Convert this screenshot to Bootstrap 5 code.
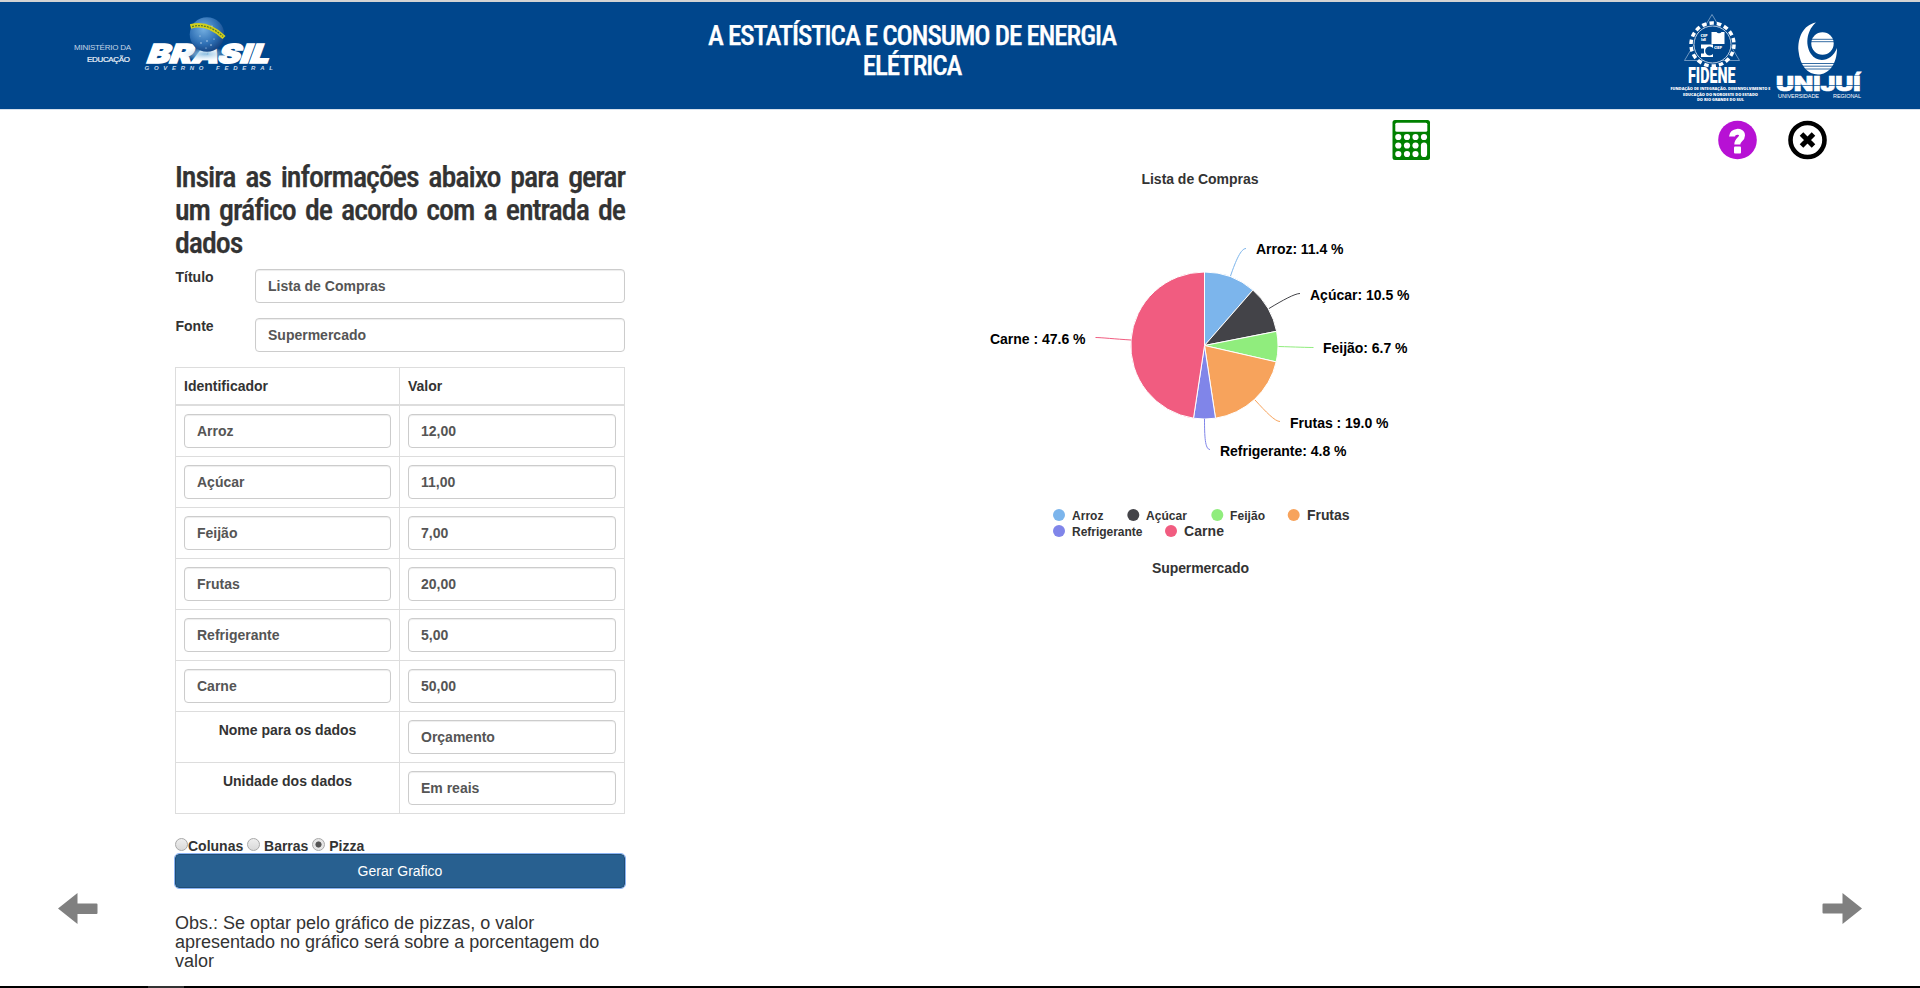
<!DOCTYPE html>
<html lang="pt-BR">
<head>
<meta charset="utf-8">
<title>A Estatística e Consumo de Energia Elétrica</title>
<link rel="stylesheet" href="https://cdn.jsdelivr.net/npm/bootstrap@5.3.0/dist/css/bootstrap.min.css">
<style>
  body { font-family: "Liberation Sans", Arial, sans-serif; font-size: 14px; line-height: 20px; color: #333; height: 988px; overflow: hidden; }
  svg { display: block; flex: none; }
  .topbar { height: 110px; margin-bottom: -1px; background: #00468c; border-top: 2px solid #d3d3d3; border-bottom: 1px solid #d5e0ec; }
  .heading-face { font-family: "Roboto Condensed", Roboto, sans-serif; font-stretch: condensed; letter-spacing: -1.05px; -webkit-text-stroke: .25px currentColor; }
  .page-title { width: 450px; margin: 19px 0 0 397px; font-size: 27px; line-height: 30px; font-weight: 500; color: #fff; text-align: center; }
  .brand-left { margin: 0 0 0 60px; }
  .brand-right { margin-left: auto; }
  .workspace { height: 877px; }
  .side-left { width: 175px; padding: 784px 0 0 58px; }
  .form-panel { width: 450px; padding-top: 51px; }
  .form-title { font-size: 30px; line-height: 33px; font-weight: 500; margin: 0 0 10px; color: #333; text-align: justify; }
  .field-row { height: 34px; margin-bottom: 15px; }
  .field-name { width: 80px; font-weight: 700; line-height: 17px; padding-left: .5px; }
  .form-control { height: 34px; padding: 6px 12px; font-size: 14px; line-height: 20px; font-weight: 700; color: #555; border: 1px solid #ccc; border-radius: 4px; box-shadow: inset 0 1px 1px rgba(0,0,0,.075); }
  .data-table { table-layout: fixed; border: 1px solid #ddd; border-collapse: collapse; margin: 0 0 21px; color: #333; }
  .data-table th, .data-table td { border: 1px solid #ddd; padding: 8px; font-weight: 700; vertical-align: top; }
  .data-table th:first-child { width: 224px; }
  .data-table thead th { border-bottom: 2px solid #ddd; }
  .kind-row { height: 19px; font-weight: 700; line-height: 23px; white-space: pre; }
  .kind-row .dot { width: 13px; height: 13px; border-radius: 50%; border: 1px solid #a8a8a8; background: linear-gradient(#eee,#d9d9d9); display: inline-block; }
  .kind-row .dot-on { background: radial-gradient(circle, #555 0 2.7px, #e6e6e6 3.4px); }
  .btn-run { height: 34px; background: #286090; border: 1px solid #204d74; border-radius: 4px; color: #fff; font-size: 14px; line-height: 20px; padding: 6px; outline: 1px solid #8bb4f4; }
  .note { font-size: 18px; line-height: 19px; margin: 26px 0 0; }
  .result { width: 500px; margin-left: 335px; }
  .side-right { flex: 1; }
  .tools { height: 51px; padding-top: 10px; }
  .bottom-edge { height: 2px; background: #000; }
  .bottom-edge div { width: 36px; height: 2px; margin-left: 148px; background: #333; }
</style>
</head>
<body class="bg-white">
<header class="topbar d-flex align-items-start">
  <svg class="brand-left" width="230" height="106" viewBox="60 2 230 106" font-family="Liberation Sans, sans-serif">
    <defs>
      <radialGradient id="globe" cx=".4" cy=".35" r=".7"><stop offset="0" stop-color="#73aee0"/><stop offset=".6" stop-color="#2f70b5"/><stop offset="1" stop-color="#123f7d"/></radialGradient>
      <radialGradient id="glow"><stop offset="0" stop-color="#8fc0e2"/><stop offset="1" stop-color="#cfe4f3" stop-opacity="0"/></radialGradient>
    </defs>
    <text x="74" y="50" font-size="8" fill="#c5d5e6" textLength="57">MINISTÉRIO DA</text>
    <text x="87" y="61.500" font-size="8" fill="#f0f5fa" stroke="#f0f5fa" stroke-width=".2" textLength="43">EDUCAÇÃO</text>
    <g transform="translate(208 62.500) skewX(-9)">
      <text x="-61" y="0" font-family="Inter, sans-serif" font-weight="900" font-style="italic" font-size="26" fill="#fff" stroke="#fff" stroke-width="1.500" textLength="122" lengthAdjust="spacingAndGlyphs">BRASIL</text>
    </g>
    <ellipse cx="205" cy="54" rx="23" ry="7" fill="url(#glow)"/>
    <circle cx="207" cy="34.500" r="17.300" fill="url(#globe)"/>
    <path d="M190.500 26.500q17-5 33.500 11" fill="none" stroke="#d2cf1c" stroke-width="4.500"/>
    <path d="M192 26.500q16-4 31 10" fill="none" stroke="#5d7e28" stroke-width="1.300" stroke-dasharray="2 1"/>
    <g fill="#d7e8f7"><circle cx="201" cy="43" r=".7"/><circle cx="207" cy="41" r=".7"/><circle cx="211" cy="45" r=".7"/><circle cx="200" cy="36" r=".6"/><circle cx="214" cy="39" r=".6"/><circle cx="206" cy="48" r=".6"/><circle cx="212" cy="26" r=".6"/></g>
    <text x="144.500" y="69.500" font-size="6" font-style="italic" font-weight="700" fill="#cbdbea" textLength="59">GOVERNO</text>
    <text x="216" y="69.500" font-size="6" font-style="italic" font-weight="700" fill="#cbdbea" textLength="57">FEDERAL</text>
  </svg>
  <h1 class="page-title heading-face">A ESTATÍSTICA E CONSUMO DE ENERGIA ELÉTRICA</h1>
  <svg class="brand-right" width="260" height="106" viewBox="1660 2 260 106" fill="#fff" font-family="Open Sans, sans-serif">
    <path d="M1712 14.500L1739.500 60.500H1684.500Z" fill="none" stroke="#88a9cd" stroke-width=".8"/>
    <circle cx="1712.500" cy="44.500" r="21.500" fill="none" stroke="#fff" stroke-width="3.500" stroke-dasharray="4.500 3.005"/>
    <circle cx="1712.500" cy="44.500" r="18.500" fill="#00468c" stroke="#bed0e4" stroke-width="1"/>
    <path d="M1711.500 32h5a3 3 0 0 0 5 0h3v12h-13z"/>
    <path d="M1701 44.500h12v3.500a4.500 4.500 0 1 0 0 6v3h-12v-3.500h3v-5h-3z"/>
    <text x="1700.500" y="36.500" font-size="4" font-weight="800" textLength="7">CEP</text><text x="1701" y="41" font-size="4" font-weight="800" textLength="5">IdI</text><text x="1714" y="49" font-size="4" font-weight="800" textLength="8">CIEP</text>
    <text x="1688" y="83" font-family="Roboto, sans-serif" font-size="21.500" font-weight="900" textLength="47.500" lengthAdjust="spacingAndGlyphs">FIDENE</text>
    <g font-size="4.200" font-weight="800">
      <text x="1670.500" y="90" textLength="100" lengthAdjust="spacingAndGlyphs">FUNDAÇÃO DE INTEGRAÇÃO, DESENVOLVIMENTO E</text>
      <text x="1683" y="95.700" textLength="75" lengthAdjust="spacingAndGlyphs">EDUCAÇÃO DO NOROESTE DO ESTADO</text>
      <text x="1697" y="101" textLength="47" lengthAdjust="spacingAndGlyphs">DO RIO GRANDE DO SUL</text>
    </g>
    <path d="M1816 22.500C1803 25 1797.500 38 1798.500 51C1800 66 1808 74.500 1818 74.500C1829 74.500 1837 64 1837 48C1832 61 1818 64 1811 54C1804 43 1808 29 1816 22.500Z"/>
    <circle cx="1822.500" cy="43.500" r="11.200"/>
    <path d="M1810 39.300h25M1810 41.700h25M1799 63.500h37M1801 66.200h34M1802 69h30" stroke="#00468c" stroke-width=".8"/>
    <text x="1776" y="91.300" font-family="Inter, sans-serif" font-size="19.500" font-weight="900" stroke="#fff" stroke-width=".6" textLength="84.500" lengthAdjust="spacingAndGlyphs">UNIJUÍ</text>
    <path d="M1776 85.500h84" stroke="#00468c" stroke-width=".7"/>
    <g font-family="Liberation Sans, sans-serif" font-size="5.500"><text x="1778" y="97.500" textLength="41">UNIVERSIDADE</text><text x="1833" y="97.500" textLength="28">REGIONAL</text></g>
  </svg>
</header>

<main class="workspace d-flex">
  <aside class="side-left flex-shrink-0">
    <svg width="40" height="32" fill="#808080"><path d="M0 15.500L19.500 0V10.500H38.500q1 0 1 1V20q0 1-1 1H19.500V31Z"/></svg>
  </aside>

  <section class="form-panel flex-shrink-0">
    <h2 class="form-title heading-face">Insira as informações abaixo para gerar um gráfico de acordo com a entrada de dados</h2>
    <div class="field-row d-flex"><label class="field-name">Título</label><input class="form-control flex-fill w-auto" value="Lista de Compras"></div>
    <div class="field-row d-flex"><label class="field-name">Fonte</label><input class="form-control flex-fill w-auto" value="Supermercado"></div>
    <table class="data-table w-100">
      <thead><tr><th>Identificador</th><th>Valor</th></tr></thead>
      <tbody>
        <tr><td><input class="form-control" value="Arroz"></td><td><input class="form-control" value="12,00"></td></tr>
        <tr><td><input class="form-control" value="Açúcar"></td><td><input class="form-control" value="11,00"></td></tr>
        <tr><td><input class="form-control" value="Feijão"></td><td><input class="form-control" value="7,00"></td></tr>
        <tr><td><input class="form-control" value="Frutas"></td><td><input class="form-control" value="20,00"></td></tr>
        <tr><td><input class="form-control" value="Refrigerante"></td><td><input class="form-control" value="5,00"></td></tr>
        <tr><td><input class="form-control" value="Carne"></td><td><input class="form-control" value="50,00"></td></tr>
        <tr><td class="text-center">Nome para os dados</td><td><input class="form-control" value="Orçamento"></td></tr>
        <tr><td class="text-center">Unidade dos dados</td><td><input class="form-control" value="Em reais"></td></tr>
      </tbody>
    </table>
    <div class="kind-row"><span class="dot"></span>Colunas <span class="dot"></span> Barras <span class="dot dot-on"></span> Pizza</div>
    <button class="btn btn-run w-100 d-block">Gerar Grafico</button>
    <p class="note">Obs.: Se optar pelo gráfico de pizzas, o valor apresentado no gráfico será sobre a porcentagem do valor</p>
  </section>

  <section class="result flex-shrink-0">
    <div class="tools d-flex justify-content-end">
      <svg class="me-4" width="44" height="42" viewBox="1392 119 44 42">
        <rect x="1392.500" y="120" width="37.500" height="40" rx="2.500" fill="#008000"/>
        <g fill="#fff"><rect x="1395.300" y="122.800" width="32" height="9" rx="1.500"/>
        <circle cx="1398.300" cy="137" r="3.100"/><circle cx="1407" cy="137" r="3.100"/><circle cx="1415.500" cy="137" r="3.100"/><circle cx="1424" cy="137" r="3.100"/>
        <circle cx="1398.300" cy="145.500" r="3.100"/><circle cx="1407" cy="145.500" r="3.100"/><circle cx="1415.500" cy="145.500" r="3.100"/>
        <circle cx="1398.300" cy="154" r="3.100"/><circle cx="1407" cy="154" r="3.100"/><circle cx="1415.500" cy="154" r="3.100"/>
        <rect x="1420.900" y="142.400" width="6.200" height="14.700" rx="3.100"/></g>
      </svg>
    </div>
    <svg width="500" height="430" viewBox="960 160 500 430" font-family="Liberation Sans, sans-serif" font-size="14" font-weight="700">
      <text x="1141.500" y="184" fill="#333" textLength="117">Lista de Compras</text>
      <g stroke="#fff" stroke-width="1" stroke-linejoin="round" transform="translate(-.5 0)">
        <path fill="#7cb5ec" d="M1205 345.500V272A73.500 73.500 0 0 1 1253.400 290.100Z"/>
        <path fill="#434348" d="M1205 345.500L1253.400 290.100A73.500 73.500 0 0 1 1277.100 331.300Z"/>
        <path fill="#90ed7d" d="M1205 345.500L1277.100 331.300A73.500 73.500 0 0 1 1276.700 361.900Z"/>
        <path fill="#f7a35c" d="M1205 345.500L1276.700 361.900A73.500 73.500 0 0 1 1216 418.200Z"/>
        <path fill="#8085e9" d="M1205 345.500L1216 418.200A73.500 73.500 0 0 1 1194 418.200Z"/>
        <path fill="#f15c80" d="M1205 345.500L1194 418.200A73.500 73.500 0 0 1 1205 272Z"/>
      </g>
      <g fill="none" stroke-width="1">
        <path stroke="#7cb5ec" d="M1246 248.500C1241 248.500 1236 260 1230.500 276"/>
        <path stroke="#434348" d="M1300 293.500C1295 293.500 1283 300 1269 308.500"/>
        <path stroke="#90ed7d" d="M1313.500 347.500C1308 347.500 1295 347 1278.500 346.500"/>
        <path stroke="#f7a35c" d="M1280 421.500C1275 421.500 1266 412 1255 400"/>
        <path stroke="#8085e9" d="M1210 449.500C1205 449.500 1204.500 436 1204.500 419"/>
        <path stroke="#f15c80" d="M1095.500 337.500C1101 337.500 1115 339 1131 340"/>
      </g>
      <g fill="#000">
        <text x="1256" y="254" textLength="87.500">Arroz: 11.4 %</text>
        <text x="1310" y="300" textLength="99.500">Açúcar: 10.5 %</text>
        <text x="1323" y="353" textLength="84.500">Feijão: 6.7 %</text>
        <text x="1290" y="428" textLength="98.500">Frutas : 19.0 %</text>
        <text x="1220" y="456" textLength="126.500">Refrigerante: 4.8 %</text>
        <text x="990" y="344" textLength="95.500">Carne : 47.6 %</text>
      </g>
      <g>
        <circle cx="1059" cy="515" r="6" fill="#7cb5ec"/><circle cx="1133.300" cy="515" r="6" fill="#434348"/><circle cx="1217.300" cy="515" r="6" fill="#90ed7d"/><circle cx="1293.700" cy="515" r="6" fill="#f7a35c"/><circle cx="1059" cy="531" r="6" fill="#8085e9"/><circle cx="1171" cy="531" r="6" fill="#f15c80"/>
      </g>
      <g fill="#333" font-size="12">
        <text x="1072" y="520" textLength="31.500">Arroz</text><text x="1146" y="520" textLength="41">Açúcar</text><text x="1230" y="520" textLength="35">Feijão</text><text x="1072" y="536" textLength="70.500">Refrigerante</text>
        <g font-size="14"><text x="1307" y="520" textLength="42.500">Frutas</text><text x="1184" y="536" textLength="40">Carne</text><text x="1152" y="573" textLength="97">Supermercado</text></g>
      </g>
    </svg>
  </section>

  <aside class="side-right d-flex flex-column justify-content-between align-items-end">
    <div class="tools">
      <svg width="220" height="42" viewBox="1700 119 220 42">
        <circle cx="1737.500" cy="140" r="19.300" fill="#b711d4"/>
        <path d="M1732 136.500C1732 131 1742 130 1742 135.500C1742 139.500 1737.300 139.500 1737.300 144.500" fill="none" stroke="#fff" stroke-width="6"/>
        <rect x="1734" y="146.500" width="7" height="7" rx="1" fill="#fff"/>
        <circle cx="1807.500" cy="140" r="17" fill="#fff" stroke="#000" stroke-width="4.600"/>
        <path d="M1801.500 134l12 12M1813.500 134l-12 12" stroke="#000" stroke-width="5"/>
      </svg>
    </div>
    <svg width="98" height="93" viewBox="1822 893 98 93" fill="#808080"><path d="M1862 908.500L1842.500 893V903.500H1823.500q-1 0-1 1V912.500q0 1 1 1H1842.500V924Z"/></svg>
  </aside>
</main>
<footer class="bottom-edge"><div></div></footer>
<script src="https://cdn.jsdelivr.net/npm/bootstrap@5.3.0/dist/js/bootstrap.bundle.min.js"></script>
</body>
</html>
